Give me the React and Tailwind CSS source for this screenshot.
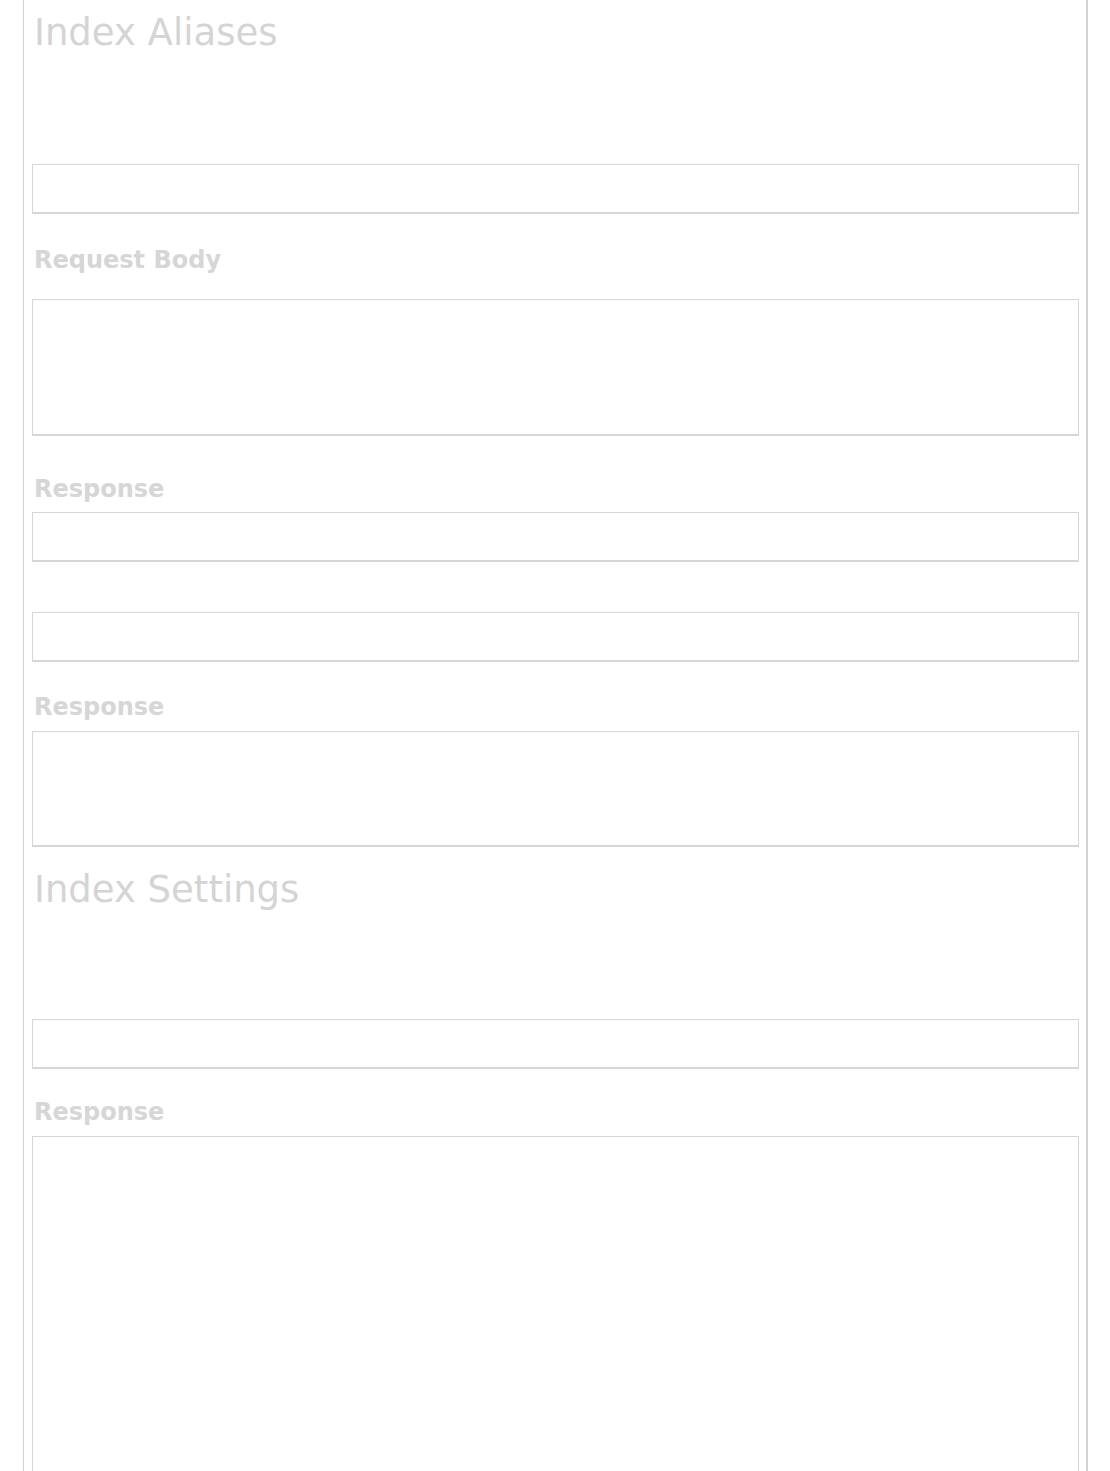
import React from "react";

const Field = ({ className = "" }) => (
  <div
    className={`w-full border border-b-2 border-[#d6d6d6] bg-white ${className}`}
  />
);

const Label = ({ children, className = "" }) => (
  <div className={`text-[24px] font-bold leading-none text-[#d6d6d6] ${className}`}>
    {children}
  </div>
);

const Heading = ({ children, className = "" }) => (
  <h2 className={`text-[37px] font-normal leading-none text-[#d4d4d4] ${className}`}>
    {children}
  </h2>
);

export default function App() {
  return (
    <div
      className="min-h-[1471px] bg-white"
      style={{ fontFamily: '"DejaVu Sans", Verdana, sans-serif' }}
    >
      <div className="ml-[23px] w-[1065px] h-[1471px] overflow-hidden border-l border-r-2 border-[#d2d2d2] pl-[8px] pr-[7px]">
        {/* Aliases */}
        <Heading className="pt-[14px] pl-[2px]">Index Aliases</Heading>
        <Field className="mt-[113px] h-[50px]" />

        <Label className="mt-[34px] pl-[2px]">Request Body</Label>
        <Field className="mt-[27px] h-[137px]" />

        <Label className="mt-[41px] pl-[2px]">Response</Label>
        <Field className="mt-[11px] h-[50px]" />

        <Field className="mt-[50px] h-[50px]" />

        <Label className="mt-[33px] pl-[2px]">Response</Label>
        <Field className="mt-[12px] h-[116px]" />

        {/* Settings */}
        <Heading className="mt-[24px] pl-[2px]">Index Settings</Heading>
        <Field className="mt-[111px] h-[50px]" />

        <Label className="mt-[31px] pl-[2px]">Response</Label>
        <Field className="mt-[12px] h-[420px]" />
      </div>
    </div>
  );
}
